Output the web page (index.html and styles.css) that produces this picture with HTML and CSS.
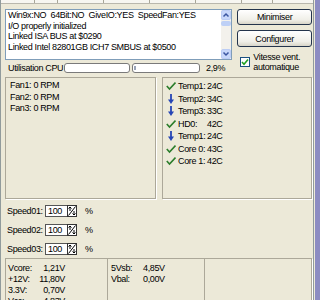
FILE: index.html
```html
<!DOCTYPE html>
<html>
 <head>
  <title>SpeedFan</title>
  <link rel="stylesheet" href="styles.css">
 </head>
 <body>
  <div id="window">
   <div class="sheet">
    <div class="tabs">
     <span style="width:33px"></span><span style="width:22px"></span><span style="width:45px"></span><span style="width:45px"></span><span style="width:45px"></span><span style="width:45px"></span><span style="width:30px"></span>
    </div>

    <div class="top">
     <div class="leftCol">
      <div class="log">
       <div class="lines">
        <div class="line">Win9x:NO  64Bit:NO  GiveIO:YES  SpeedFan:YES</div>
        <div class="line">I/O properly initialized</div>
        <div class="line">Linked ISA BUS at $0290</div>
        <div class="line">Linked Intel 82801GB ICH7 SMBUS at $0500</div>
       </div>
       <div class="scrollbar">
        <div class="arrow"><svg width="8" height="8" viewBox="0 0 8 8"><path d="M1.5 5.5 L4 3 L6.5 5.5" fill="none" stroke="#3a55a0" stroke-width="1.5"/></svg></div>
        <div class="thumb"></div>
        <div class="track"></div>
        <div class="arrow"><svg width="8" height="8" viewBox="0 0 8 8"><path d="M1.5 2.5 L4 5 L6.5 2.5" fill="none" stroke="#3a55a0" stroke-width="1.5"/></svg></div>
       </div>
      </div>
      <div class="cpu">
       <span class="cpuLabel">Utilisation CPU</span>
       <span class="bar"></span>
       <span class="bar second"><span class="fill"></span></span>
       <span class="percent">2,9%</span>
      </div>
     </div>

     <div class="actions">
      <button type="button" class="btn">Minimiser</button>
      <button type="button" class="btn second">Configurer</button>
      <div class="check">
       <span class="box"><svg width="8" height="8" viewBox="0 0 8 8"><path d="M1 4 L3 6.2 L7 1.5" fill="none" stroke="#21a121" stroke-width="1.6"/></svg></span>
       <span class="checkText">Vitesse vent.<br>automatique</span>
      </div>
     </div>
    </div>

    <div class="readings">
     <div class="panel fans">
      <div>Fan1: 0 RPM</div>
      <div>Fan2: 0 RPM</div>
      <div>Fan3: 0 RPM</div>
     </div>
     <div class="panel temps">
      <div class="temp"><svg class="ok" width="10" height="10" viewBox="0 0 10 10"><path d="M0.8 5 L3.5 8 L9.5 1.5" fill="none" stroke="#2b7d2b" stroke-width="1.6"/></svg><span class="name">Temp1:</span><span>24C</span></div>
      <div class="temp"><svg class="down" width="10" height="10" viewBox="0 0 10 10"><path d="M5 0 V7" stroke="#2545b5" stroke-width="1.8"/><path d="M2 5.5 L5 10 L8 5.5 Z" fill="#2545b5"/></svg><span class="name">Temp2:</span><span>34C</span></div>
      <div class="temp"><svg class="down" width="10" height="10" viewBox="0 0 10 10"><path d="M5 0 V7" stroke="#2545b5" stroke-width="1.8"/><path d="M2 5.5 L5 10 L8 5.5 Z" fill="#2545b5"/></svg><span class="name">Temp3:</span><span>33C</span></div>
      <div class="temp"><svg class="ok" width="10" height="10" viewBox="0 0 10 10"><path d="M0.8 5 L3.5 8 L9.5 1.5" fill="none" stroke="#2b7d2b" stroke-width="1.6"/></svg><span class="name">HD0:</span><span>42C</span></div>
      <div class="temp"><svg class="down" width="10" height="10" viewBox="0 0 10 10"><path d="M5 0 V7" stroke="#2545b5" stroke-width="1.8"/><path d="M2 5.5 L5 10 L8 5.5 Z" fill="#2545b5"/></svg><span class="name">Temp1:</span><span>24C</span></div>
      <div class="temp"><svg class="ok" width="10" height="10" viewBox="0 0 10 10"><path d="M0.8 5 L3.5 8 L9.5 1.5" fill="none" stroke="#2b7d2b" stroke-width="1.6"/></svg><span class="name">Core 0:</span><span>43C</span></div>
      <div class="temp"><svg class="ok" width="10" height="10" viewBox="0 0 10 10"><path d="M0.8 5 L3.5 8 L9.5 1.5" fill="none" stroke="#2b7d2b" stroke-width="1.6"/></svg><span class="name">Core 1:</span><span>42C</span></div>
     </div>
    </div>

    <div class="speeds">
     <div class="speed">
      <span class="speedLabel">Speed01:</span><span class="input">100</span>
      <svg class="spin" width="10" height="12" viewBox="0 0 10 12"><rect x="0.5" y="0.5" width="9" height="11" fill="#fff" stroke="#333"/><path d="M1.5 10.5 L8.5 1.5" stroke="#000"/><path d="M3 2 V6 M1.5 3.5 L3 2 L4.5 3.5" fill="none" stroke="#000"/><path d="M7 6 V10 M5.5 8.5 L7 10 L8.5 8.5" fill="none" stroke="#000"/></svg>
      <span class="unit">%</span>
     </div>
     <div class="speed">
      <span class="speedLabel">Speed02:</span><span class="input">100</span>
      <svg class="spin" width="10" height="12" viewBox="0 0 10 12"><rect x="0.5" y="0.5" width="9" height="11" fill="#fff" stroke="#333"/><path d="M1.5 10.5 L8.5 1.5" stroke="#000"/><path d="M3 2 V6 M1.5 3.5 L3 2 L4.5 3.5" fill="none" stroke="#000"/><path d="M7 6 V10 M5.5 8.5 L7 10 L8.5 8.5" fill="none" stroke="#000"/></svg>
      <span class="unit">%</span>
     </div>
     <div class="speed">
      <span class="speedLabel">Speed03:</span><span class="input">100</span>
      <svg class="spin" width="10" height="12" viewBox="0 0 10 12"><rect x="0.5" y="0.5" width="9" height="11" fill="#fff" stroke="#333"/><path d="M1.5 10.5 L8.5 1.5" stroke="#000"/><path d="M3 2 V6 M1.5 3.5 L3 2 L4.5 3.5" fill="none" stroke="#000"/><path d="M7 6 V10 M5.5 8.5 L7 10 L8.5 8.5" fill="none" stroke="#000"/></svg>
      <span class="unit">%</span>
     </div>
    </div>

    <div class="panel volts">
     <div class="vcol first">
      <span>Vcore:</span><span class="val">1,21V</span>
      <span>+12V:</span><span class="val">11,80V</span>
      <span>3.3V:</span><span class="val">0,70V</span>
      <span>Vcc:</span><span class="val">4,83V</span>
     </div>
     <div class="vcol second">
      <span>5Vsb:</span><span class="val">4,85V</span>
      <span>Vbal:</span><span class="val">0,00V</span>
     </div>
     <div class="vcol third"></div>
    </div>
   </div>
   <div class="frame"></div>
  </div>
 </body>
</html>
```

FILE: styles.css
```css
body {
 margin:         0;
 font-family:    "Liberation Sans", Arial, sans-serif;
 font-size:      9px;
 letter-spacing: -0.35px;
 white-space:    nowrap;
 color:          #000000;
 background:     #ece9d8;
 overflow:       hidden;
}

#window {
 display: flex;
 width:   320px;
 height:  300px;
 overflow: hidden;
}

.sheet {
 width:        307px;
 border-left:  1px solid #919b9c;
 border-right: 1px solid #919b9c;
 padding:      0 1px 0 4px;
}

.frame {
 flex:        1;
 background:  #8c8cc2;
 border-left: 1px solid #ece9d8;
}

.tabs {
 display:       flex;
 height:        3px;
 margin:        0 -1px 0 -4px;
 background:    #f7f6f1;
 border-bottom: 1px solid #b9b7ad;
}

.tabs span {
 border-right: 1px solid #a8a698;
}

/* log + buttons */
.top {
 display:    flex;
 gap:        5px;
 margin-top: 5px;
}

.leftCol {
 width: 228px;
}

.log {
 display:    flex;
 height:     51px;
 box-sizing: border-box;
 border:     1px solid #7f9db9;
 background: #ffffff;
}

.lines {
 flex:        1;
 padding:     0 2px;
 line-height: 10.5px;
 overflow:    hidden;
}

.lines .line {
 white-space: pre;
}

.scrollbar {
 display:        flex;
 flex-direction: column;
 width:          10px;
 background:     #f3f1ec;
}

.scrollbar .arrow {
 display:         flex;
 align-items:     center;
 justify-content: center;
 height:          10px;
 box-sizing:      border-box;
 border:          1px solid #bccdf5;
 border-radius:   2px;
 background:      #c8d7fa;
}

.scrollbar .thumb {
 height:        5px;
 margin-top:    1px;
 border-radius: 2px;
 background:    #bed0f6;
}

.scrollbar .track {
 flex: 1;
}

.cpu {
 display:     flex;
 align-items: center;
 height:      10px;
 margin-top:  3px;
}

.cpuLabel {
 width:        59px;
 padding-left: 3px;
 box-sizing:   border-box;
}

.bar {
 width:         66px;
 height:        10px;
 box-sizing:    border-box;
 border:        1px solid #7a7a7a;
 border-radius: 3px;
 background:    #ffffff;
}

.bar.second {
 width:       68px;
 margin-left: 2px;
 padding:     2px 1px;
}

.bar .fill {
 display:    block;
 width:      2px;
 height:     4px;
 background: #9aa4b8;
}

.percent {
 margin-left: 6px;
}

.actions {
 display:        flex;
 flex-direction: column;
 width:          75px;
}

.btn {
 height:         16px;
 padding:        0;
 font-family:    inherit;
 font-size:      9px;
 letter-spacing: -0.35px;
 color:          #000000;
 border:         1px solid #24344c;
 border-radius:  3px;
 background:     linear-gradient(#ffffff, #f0efe8 70%, #d8d5c8);
}

.btn.second {
 height:     17px;
 margin-top: 5px;
}

.check {
 display:     flex;
 margin-top:  5px;
 line-height: 10px;
}

.check .box {
 display:         flex;
 align-items:     center;
 justify-content: center;
 width:           10px;
 height:          10px;
 box-sizing:      border-box;
 margin:          5px 3px 0 3px;
 border:          1px solid #1c5180;
 background:      #ffffff;
}

/* fans and temperatures */
.readings {
 display:               grid;
 grid-template-columns: 151px 150px;
 gap:                   6px;
 margin-top:            4px;
}

.panel {
 border:     1px solid #aca899;
 box-shadow: 1px 1px 0 #ffffff;
}

.fans {
 height:      116px;
 padding:     2px 4px;
 line-height: 11.5px;
}

.temps {
 height:  116px;
 padding: 2px 3px;
}

.temp {
 display:     flex;
 align-items: center;
 height:      12.5px;
}

.temp svg {
 flex:         none;
 margin-right: 2px;
}

.temp .name {
 width: 29px;
}

/* fan speed inputs */
.speeds {
 display:        flex;
 flex-direction: column;
 gap:            7px;
 margin-top:     6px;
}

.speed {
 display:     flex;
 align-items: center;
 height:      12px;
}

.speedLabel {
 width:        40px;
 padding-left: 2px;
 box-sizing:   border-box;
}

.input {
 width:        22px;
 height:       12px;
 box-sizing:   border-box;
 padding-left: 2px;
 line-height:  10px;
 border:       1px solid #555555;
 border-right: 0;
 background:   #ffffff;
}

.unit {
 margin-left: 8px;
}

/* voltages */
.volts {
 display:               grid;
 grid-template-columns: 101px 97px 1fr;
 height:                60px;
 margin-top:            3px;
}

.vcol {
 display:       grid;
 align-content: start;
 padding-top:   4px;
 line-height:   11px;
}

.vcol.first {
 grid-template-columns: 28px 29px;
 padding-left:          2px;
}

.vcol.second {
 grid-template-columns: 32px 21px;
 padding-left:          3px;
 border-left:           1px solid #aca899;
}

.vcol.third {
 border-left: 1px solid #aca899;
}

.val {
 text-align: right;
}
```
